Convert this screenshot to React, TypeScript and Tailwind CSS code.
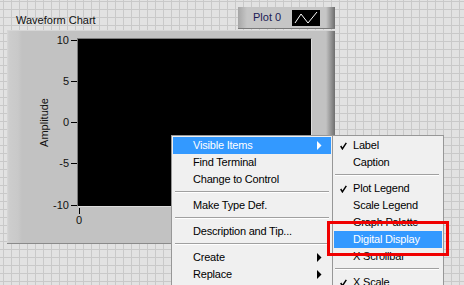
import React from "react";

const font = "font-['Liberation_Sans',Arial,sans-serif]";

function Check() {
  return (
    <svg width="7" height="8" viewBox="0 0 7 8" className="shrink-0">
      <polyline points="0.7,4 2.4,6.8 6.3,0.8" fill="none" stroke="#000" strokeWidth="1.5" />
    </svg>
  );
}

function Arrow({ white }: { white?: boolean }) {
  return (
    <svg width="5" height="9" viewBox="0 0 5 9" className="shrink-0">
      <path d="M0 0 L4.5 4.5 L0 9 Z" fill={white ? "#fff" : "#000"} />
    </svg>
  );
}

function Row({
  label,
  active,
  check,
  arrow,
  pl,
}: {
  label: string;
  active?: boolean;
  check?: boolean;
  arrow?: boolean;
  pl: string;
}) {
  return (
    <div
      className={`relative h-[17px] flex items-center ${pl} pr-[9px] ${
        active ? "bg-[#3399ff] text-white" : "text-black"
      }`}
    >
      {check && (
        <span className="absolute left-[6px] top-[5px]">
          <Check />
        </span>
      )}
      <span className="flex-1 whitespace-nowrap tracking-[-0.2px]">{label}</span>
      {arrow && <Arrow white={active} />}
    </div>
  );
}

function Sep({ cls }: { cls: string }) {
  return (
    <div className="h-[9px] pt-[3px]">
      <div className={`h-px bg-[#a0a0a0] ${cls}`} />
      <div className={`h-px bg-white ${cls}`} />
    </div>
  );
}

function YLabel({ t }: { t: string }) {
  return (
    <div className="h-[14px] flex items-center gap-[2px]">
      <span className="leading-none">{t}</span>
      <div className="w-[6px] h-px bg-black" />
    </div>
  );
}

export default function App() {
  return (
    <div
      className={`relative w-[464px] h-[285px] overflow-hidden bg-[#e2e2e2] bg-[linear-gradient(to_right,#c9c9c9_1px,transparent_1px),linear-gradient(to_bottom,#c9c9c9_1px,transparent_1px)] bg-size-[8px_8px] bg-position-[3px_1px] text-[11px] ${font}`}
    >
      {/* Waveform chart object */}
      <div className="absolute left-[7px] top-[7px] w-[328px] flex flex-col">
        <div className="h-[23px] flex justify-between">
          <span className="self-end mb-[3px] pl-[9px] leading-[14px] text-[#111]">Waveform Chart</span>
          <div className="w-[97px] h-[22px] border-b border-b-[#7a7a7a] bg-[#c6c6c6] bg-[linear-gradient(to_right,#a6a6a6,#c6c6c6_9px,#c6c6c6_calc(100%-9px),#6c6c6c)] flex items-center">
            <span className="pl-[15px] text-[#1a1a55]">Plot 0</span>
            <div className="ml-auto mr-[15px] w-[28px] h-[16px] bg-black">
              <svg width="28" height="16" viewBox="0 0 28 16">
                <polyline points="3,13 9,4 16,13 25,2" fill="none" stroke="#fff" strokeWidth="1" />
              </svg>
            </div>
          </div>
        </div>
        <div className="h-[214px] border-t border-t-[#d6d6d6] border-b border-b-[#8a8a8a] bg-[#c2c2c2] bg-[linear-gradient(to_right,#d8d8d8,#cdcdcd_2px,#c9c9c9_11px,#c2c2c2_15px,#c2c2c2_calc(100%-9px),#6e6e6e)] flex items-start pt-[7px]">
          <div className="w-[70px] flex items-start">
            <div className="ml-[30px] w-[14px] h-[169px] flex items-center justify-center">
              <span className="[writing-mode:vertical-rl] rotate-180 whitespace-nowrap text-[#111]">Amplitude</span>
            </div>
            <div className="w-[26px] -mt-[5px] h-[179px] flex flex-col justify-between items-end text-[#111]">
              <YLabel t="10" />
              <YLabel t="5" />
              <YLabel t="0" />
              <YLabel t="-5" />
              <YLabel t="-10" />
            </div>
          </div>
          <div className="flex flex-col">
            <div className="w-[235px] h-[169px] bg-black border border-t-[#7c7c7c] border-l-[#7c7c7c] border-r-[#dcdcdc] border-b-[#dcdcdc]" />
            <div className="-ml-[4px] w-[12px] flex flex-col items-center mt-[1px]">
              <div className="w-px h-[6px] bg-black" />
              <span className="leading-[12px] text-[#111]">0</span>
            </div>
          </div>
        </div>
      </div>

      {/* Context menu */}
      <div className="absolute left-[171px] top-[135px] w-[162px] border border-[#979797] bg-[#f0f0f0] px-px pt-px pb-[8px]">
        <Row label="Visible Items" active arrow pl="pl-[20px]" />
        <Row label="Find Terminal" pl="pl-[20px]" />
        <Row label="Change to Control" pl="pl-[20px]" />
        <Sep cls="ml-[2px] mr-[2px]" />
        <Row label="Make Type Def." pl="pl-[20px]" />
        <Sep cls="ml-[2px] mr-[2px]" />
        <Row label="Description and Tip..." pl="pl-[20px]" />
        <Sep cls="ml-[2px] mr-[2px]" />
        <Row label="Create" arrow pl="pl-[20px]" />
        <Row label="Replace" arrow pl="pl-[20px]" />
      </div>

      {/* Submenu */}
      <div className="absolute left-[332px] top-[135px] w-[112px] border border-[#979797] bg-[#f0f0f0] p-px">
        <Row label="Label" check pl="pl-[19px]" />
        <Row label="Caption" pl="pl-[19px]" />
        <Sep cls="ml-[1px] mr-[3px]" />
        <Row label="Plot Legend" check pl="pl-[19px]" />
        <Row label="Scale Legend" pl="pl-[19px]" />
        <Row label="Graph Palette" pl="pl-[19px]" />
        <Row label="Digital Display" active pl="pl-[19px]" />
        <Row label="X Scrollbar" pl="pl-[19px]" />
        <Sep cls="ml-[1px] mr-[3px]" />
        <Row label="X Scale" check pl="pl-[19px]" />
      </div>

      {/* Red highlight rectangle */}
      <div className="absolute left-[327px] top-[221px] w-[122px] h-[35px] border-[3px] border-[#f00000]" />
    </div>
  );
}
